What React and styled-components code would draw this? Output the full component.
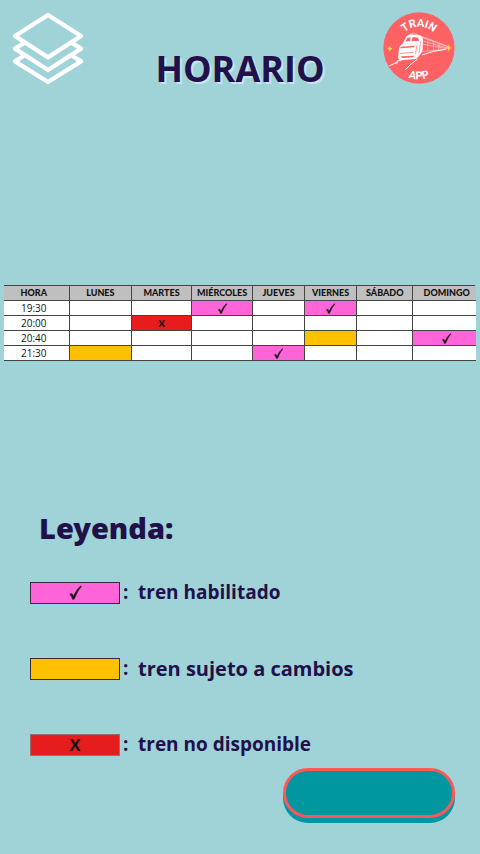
import React from "react";
import styled, { createGlobalStyle } from "styled-components";

const GlobalStyle = createGlobalStyle`
  * { box-sizing: border-box; }
  body {
    margin: 0;
    background: #a0d3d8;
    color: #21104a;
    font-family: "Open Sans", "Noto Sans", sans-serif;
  }
`;

const Page = styled.main`
  min-height: 100vh;
  display: flex;
  flex-direction: column;
  background: #a0d3d8;
`;

const Header = styled.header`
  display: grid;
  grid-template-columns: 1fr auto 1fr;
  align-items: start;
  padding: 12px 12px 0;
`;

const MenuButton = styled.button`
  width: 72px;
  height: 73px;
  padding: 0;
  border: 0;
  background: none;
  cursor: pointer;
  svg { display: block; }
`;

const Title = styled.h1`
  margin: 32px 0 0;
  font-size: 36px;
  line-height: 50px;
  font-weight: 700;
  text-shadow: 2px 2px 0 #c9e4ee;
`;

const Brand = styled.div`
  justify-self: end;
  padding-right: 13px;
  svg { display: block; }
`;

const Schedule = styled.section`
  padding: 0 4px;
  margin-top: 191px;
`;

const Table = styled.table`
  width: 100%;
  table-layout: fixed;
  border-collapse: collapse;
  background: #fff;
  color: #111;
  font-family: Lato, sans-serif;
  font-size: 10px;
  line-height: 14px;
  text-align: center;
`;

const Col = styled.col`
  width: ${(p) => p.$share}%;
`;

const HeadCell = styled.th`
  height: 15px;
  padding: 0;
  background: #bfbfbf;
  border: 1px solid #444;
  border-left-color: ${(p) => (p.$first ? "#bfbfbf" : "#444")};
  border-right-color: ${(p) => (p.$last ? "#bfbfbf" : "#444")};
  font-weight: 900;
  font-size: 9px;
  white-space: nowrap;
  padding-left: ${(p) => (p.$last ? 5 : 0)}px;
  padding-right: ${(p) => (p.$first ? 6 : 0)}px;
`;

const fills = { yes: "#ff64d8", maybe: "#ffc000", no: "#e71d1d", none: "#ffffff" };

const Cell = styled.td`
  height: 15px;
  padding: 0;
  border: 1px solid #444;
  border-right-color: ${(p) => (p.$last ? fills[p.$state] : "#444")};
  background: ${(p) => fills[p.$state]};
  font-weight: 900;
  padding-left: ${(p) => (p.$last ? 5 : 0)}px;
  svg { display: block; margin: 0 auto; }
`;

const HourCell = styled.th`
  height: 15px;
  padding: 0 6px 0 0;
  border: 1px solid #444;
  border-left-color: #fff;
  font-family: "Open Sans", sans-serif;
  font-weight: 400;
`;

const Legend = styled.section`
  display: flex;
  flex-direction: column;
  padding: 0 30px;
  margin-top: 146px;
`;

const LegendTitle = styled.h2`
  margin: 0 0 31px 9px;
  font-family: "Noto Sans", sans-serif;
  font-size: 29px;
  line-height: 41px;
  font-weight: 900;
`;

const LegendList = styled.ul`
  display: flex;
  flex-direction: column;
  gap: 49px;
  margin: 0;
  padding: 0;
  list-style: none;
`;

const LegendItem = styled.li`
  display: grid;
  grid-template-columns: 90px 18px 1fr;
  align-items: center;
  line-height: 27px;
  font-weight: 700;
  font-size: ${(p) => (p.$large ? 20 : 19)}px;
`;

const Swatch = styled.span`
  display: flex;
  align-items: center;
  justify-content: center;
  height: 22px;
  border: 1px solid ${(p) => (p.$state === "no" ? "#a06a70" : "#3b2b35")};
  background: ${(p) => fills[p.$state]};
  color: #111;
  font-size: 16px;
  font-family: Lato, sans-serif;
  font-weight: 900;
`;

const Colon = styled.span`
  padding-left: 3px;
  font-size: 19px;
`;

const Action = styled.button`
  align-self: flex-end;
  width: 172px;
  height: 50px;
  margin: 10px 25px 36px 0;
  border: 3px solid #ff5757;
  border-radius: 25px;
  background: #0097a0;
  box-shadow: 0 5px 0 #0097a0;
  cursor: pointer;
`;

const Check = ({ size }) => (
  <svg width={size} height={size} viewBox="0 0 12 12" aria-label="habilitado">
    <path d="M1.4 7.4 Q2.8 6.4 3.4 7.2 L4.4 9 Q7 3.2 10.2 .7 L10.8 1 Q7.7 4.4 5 11.2 L3.8 11.5 Q3 9 1.4 7.4Z" fill="#16111a" stroke="#16111a" strokeWidth=".5" />
  </svg>
);

const LayersIcon = () => (
  <svg width="72" height="73" viewBox="36 36 216 219" aria-hidden="true">
    <g fill="none" stroke="#fff" strokeWidth="13" strokeLinejoin="round" strokeLinecap="round">
      <path d="M144 45 L243 108 L144 172 L45 108Z" />
      <path d="M70 130 L45 146 L144 210 L243 146 L218 130" />
      <path d="M70 168 L45 184 L144 246 L243 184 L218 168" />
    </g>
  </svg>
);

const TrainLogo = () => (
  <svg width="72" height="72" viewBox="23 20 216 216" role="img" aria-label="Train App">
    <defs>
      <path id="arcTop" d="M67 128 A64 64 0 0 1 195 128" />
      <path id="arcBottom" d="M37 128 A94 94 0 0 0 225 128" />
    </defs>
    <circle cx="131" cy="128" r="107" fill="#ff6265" />
    <g fill="#fff" fontFamily="Roboto, sans-serif" fontWeight="700" fontSize="33" textAnchor="middle">
      <text><textPath href="#arcTop" startOffset="50%">TRAIN</textPath></text>
      <text><textPath href="#arcBottom" startOffset="50%">APP</textPath></text>
    </g>
    <path d="M89 101 Q93 89 106 87 L133 90 Q144 95 143 108 L142 132 Q139 147 122 161 L77 165 Q66 162 69 151 L71 129 Q73 120 82 115Z" fill="#fff" />
    <path d="M95 99 L106 95 L104 107 L91 109Z M112 95 L129 97 L131 107 L109 107Z M76 124 L119 121 L116 126 L75 129Z M77 153 L117 151 L114 156 L80 158Z" fill="#ff6265" />
    <path d="M74 144 L117 141 M124 121 L121 146 M136 109 L131 143" fill="none" stroke="#ff6265" strokeWidth="2" />
    <g fill="none" stroke="#fff" strokeWidth="2" opacity=".7">
      <path d="M103 88 L112 83 L218 123 M137 95 L218 125 M143 107 L216 128 M143 117 L213 130 M140 139 L214 131 M158 101 L157 135 M175 107 L174 134 M191 114 L190 132" />
    </g>
    <path d="M71 165 Q59 176 43 181 M126 162 Q107 174 91 192 M142 148 Q174 136 211 132" fill="none" stroke="#fff" strokeWidth="3" strokeLinecap="round" />
    <path d="M66 166 L78 166 M57 174 L68 172" stroke="#fff" strokeWidth="3" />
    <g fill="#ffd84d">
      <path d="M43 120 Q44 129 52 130 Q44 131 43 140 Q42 131 34 130 Q42 129 43 120Z" />
      <path d="M220 117 Q221 127 230 128 Q221 129 220 139 Q219 129 210 128 Q219 127 220 117Z" />
    </g>
  </svg>
);

const columns = [
  { name: "HORA", share: 13.7 },
  { name: "LUNES", share: 13.3 },
  { name: "MARTES", share: 12.7 },
  { name: "MIÉRCOLES", share: 13 },
  { name: "JUEVES", share: 11 },
  { name: "VIERNES", share: 11.1 },
  { name: "SÁBADO", share: 11.9 },
  { name: "DOMINGO", share: 13.3 },
];

const rows = [
  { hour: "19:30", days: ["none", "none", "yes", "none", "yes", "none", "none"] },
  { hour: "20:00", days: ["none", "no", "none", "none", "none", "none", "none"] },
  { hour: "20:40", days: ["none", "none", "none", "none", "maybe", "none", "yes"] },
  { hour: "21:30", days: ["maybe", "none", "none", "yes", "none", "none", "none"] },
];

const legend = [
  { state: "yes", label: "tren habilitado" },
  { state: "maybe", label: "tren sujeto a cambios", large: true },
  { state: "no", label: "tren no disponible" },
];

const Mark = ({ state, size }) => {
  if (state === "yes") return <Check size={size} />;
  if (state === "no") return "X";
  return null;
};

export default function App() {
  return (
    <Page>
      <GlobalStyle />
      <Header>
        <MenuButton type="button" aria-label="Menú"><LayersIcon /></MenuButton>
        <Title>HORARIO</Title>
        <Brand><TrainLogo /></Brand>
      </Header>
      <Schedule>
        <Table>
          <colgroup>
            {columns.map((c) => <Col key={c.name} $share={c.share} />)}
          </colgroup>
          <thead>
            <tr>
              {columns.map((c, i) => (
                <HeadCell key={c.name} scope="col" $first={i === 0} $last={i === columns.length - 1}>{c.name}</HeadCell>
              ))}
            </tr>
          </thead>
          <tbody>
            {rows.map((r) => (
              <tr key={r.hour}>
                <HourCell scope="row">{r.hour}</HourCell>
                {r.days.map((d, i) => (
                  <Cell key={i} $state={d} $last={i === r.days.length - 1}><Mark state={d} size={11} /></Cell>
                ))}
              </tr>
            ))}
          </tbody>
        </Table>
      </Schedule>
      <Legend>
        <LegendTitle>Leyenda:</LegendTitle>
        <LegendList>
          {legend.map((l) => (
            <LegendItem key={l.state} $large={l.large}>
              <Swatch $state={l.state}><Mark state={l.state} size={15} /></Swatch>
              <Colon>:</Colon>
              <span>{l.label}</span>
            </LegendItem>
          ))}
        </LegendList>
      </Legend>
      <Action type="button" aria-label="Continuar" />
    </Page>
  );
}
